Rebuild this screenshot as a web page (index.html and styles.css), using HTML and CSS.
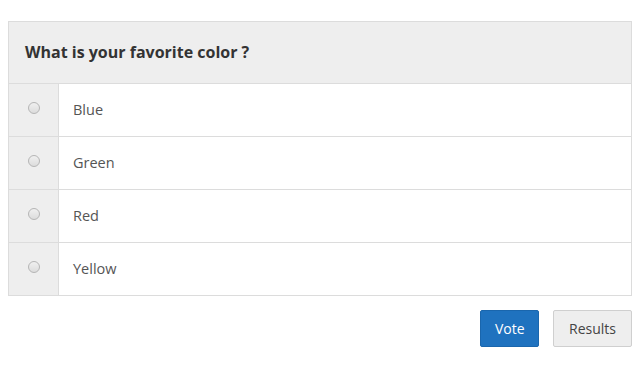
FILE: index.html
```html
<!DOCTYPE html>
<html>
<head>
<meta charset="utf-8">
<link rel="stylesheet" href="styles.css">
</head>
<body>
<div class="poll">
  <div class="poll-head">What is your favorite color ?</div>
  <label class="opt"><span class="opt-radio"><span class="radio"></span></span><span class="opt-text">Blue</span></label>
  <label class="opt"><span class="opt-radio"><span class="radio"></span></span><span class="opt-text">Green</span></label>
  <label class="opt"><span class="opt-radio"><span class="radio"></span></span><span class="opt-text">Red</span></label>
  <label class="opt"><span class="opt-radio"><span class="radio"></span></span><span class="opt-text">Yellow</span></label>
</div>
<div class="actions">
  <button class="btn btn-vote">Vote</button>
  <button class="btn btn-results">Results</button>
</div>
</body>
</html>
```

FILE: styles.css
```css
html, body { margin: 0; padding: 0; background: #fff; }
body {
  padding: 21px 8px 0 8px;
  font-family: "Open Sans", "Noto Sans", sans-serif;
  color: #555;
}
.poll {
  border: 1px solid #dcdcdc;
}
.poll-head {
  background: #eeeeee;
  padding: 20px 16px 20px 16px;
  font-size: 16px;
  line-height: 21px;
  font-weight: 700;
  color: #333;
  border-bottom: 1px solid #dcdcdc;
}
.opt {
  display: flex;
  height: 52px;
  border-bottom: 1px solid #dcdcdc;
}
.opt:last-child { border-bottom: none; }
.opt-radio {
  width: 50px;
  flex: none;
  background: #eeeeee;
  border-right: 1px solid #dcdcdc;
  display: flex;
  justify-content: center;
  padding-top: 18px;
  padding-left: 1px;
  box-sizing: border-box;
}
.radio {
  width: 12px;
  height: 12px;
  box-sizing: border-box;
  border-radius: 50%;
  border: 1px solid #b5b5b5;
  background: linear-gradient(#f0f0f0, #dcdcdc);
}
.opt-text {
  display: flex;
  align-items: center;
  padding-left: 14px;
  padding-bottom: 2px;
  font-size: 14.5px;
  color: #555;
}
.actions {
  display: flex;
  justify-content: flex-end;
  gap: 14px;
  margin-top: 14px;
}
.btn {
  font-family: "Open Sans", "Noto Sans", sans-serif;
  font-size: 14px;
  height: 37px;
  border-radius: 2px;
  padding: 0 14px;
  cursor: pointer;
}
.btn-vote {
  background: #1f72bf;
  border: 1px solid #1a66ad;
  color: #fff;
  width: 59px;
}
.btn-results {
  background: #eeeeee;
  border: 1px solid #cfcfcf;
  color: #444;
  width: 79px;
}
```
